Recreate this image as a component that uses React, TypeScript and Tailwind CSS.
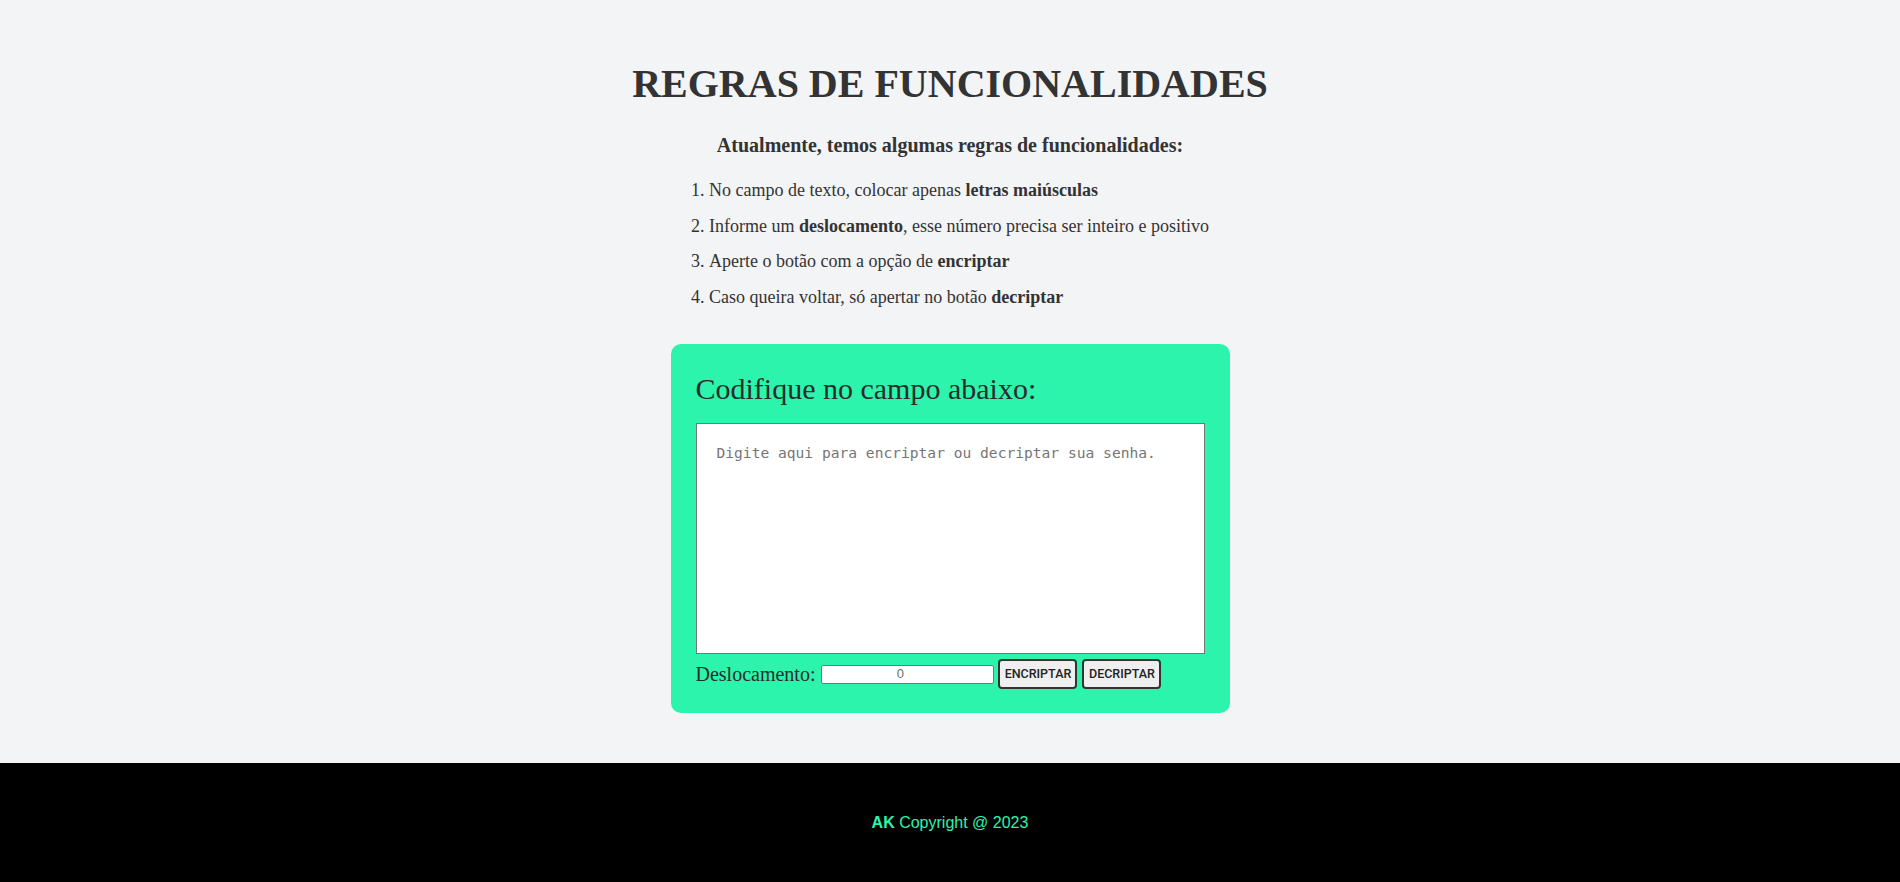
export default function App() {
  const serif = "font-['Liberation_Serif','Times_New_Roman',serif]";

  return (
    <div className={`min-h-screen bg-[#f3f4f6] text-[#333] flex flex-col ${serif}`}>
      <main className="flex flex-col items-center pt-[61px] pb-[50px]">
        <h1 className="text-[40px] font-bold leading-[46px]">REGRAS DE FUNCIONALIDADES</h1>
        <p className="mt-[27px] text-[20px] font-bold leading-[23px]">
          Atualmente, temos algumas regras de funcionalidades:
        </p>

        <ol className="mt-[16px] list-decimal list-inside text-[18px] leading-[35.5px]">
          <li>
            No campo de texto, colocar apenas <b>letras maiúsculas</b>
          </li>
          <li>
            Informe um <b>deslocamento</b>, esse número precisa ser inteiro e positivo
          </li>
          <li>
            Aperte o botão com a opção de <b>encriptar</b>
          </li>
          <li>
            Caso queira voltar, só apertar no botão <b>decriptar</b>
          </li>
        </ol>

        <section className="mt-[29px] w-[559px] rounded-[10px] bg-[#2cf4ad] px-[25px] pt-[27px] pb-[24px]">
          <h2 className="text-[30px] leading-[35px] text-[#2b2b2b]">Codifique no campo abaixo:</h2>
          <textarea
            className="mt-[17px] block w-full h-[231px] resize-none border border-[#767676] bg-white p-5 text-[14.6px] leading-[17px] font-['DejaVu_Sans_Mono',monospace] placeholder:text-[#757575] outline-none"
            placeholder="Digite aqui para encriptar ou decriptar sua senha."
          />
          <div className="mt-[5px] flex h-[30px] items-center">
            <label className="text-[20px] leading-[23px] text-[#2b2b2b]">Deslocamento:</label>
            <input
              type="number"
              placeholder="0"
              className="ml-[6px] h-[19px] w-[173px] rounded-[2px] border border-[#767676] bg-white text-center text-[13px] font-['Liberation_Sans',Arial,sans-serif] placeholder:text-[#6d6d6d] outline-none"
            />
            <button className="ml-[4px] flex h-[30px] w-[79px] items-center justify-center rounded-[4px] border-2 border-[#333] bg-[#efefef] text-[12.5px] font-medium text-[#222] font-['Roboto',Arial,sans-serif]">
              ENCRIPTAR
            </button>
            <button className="ml-[5px] flex h-[30px] w-[79px] items-center justify-center rounded-[4px] border-2 border-[#333] bg-[#efefef] text-[12.5px] font-medium text-[#222] font-['Roboto',Arial,sans-serif]">
              DECRIPTAR
            </button>
          </div>
        </section>
      </main>

      <footer className="flex h-[119px] items-center justify-center bg-black text-[16px] text-[#2cf4ad] font-['Liberation_Sans',Arial,sans-serif]">
        <span>
          <b>AK</b> Copyright @ 2023
        </span>
      </footer>
    </div>
  );
}
